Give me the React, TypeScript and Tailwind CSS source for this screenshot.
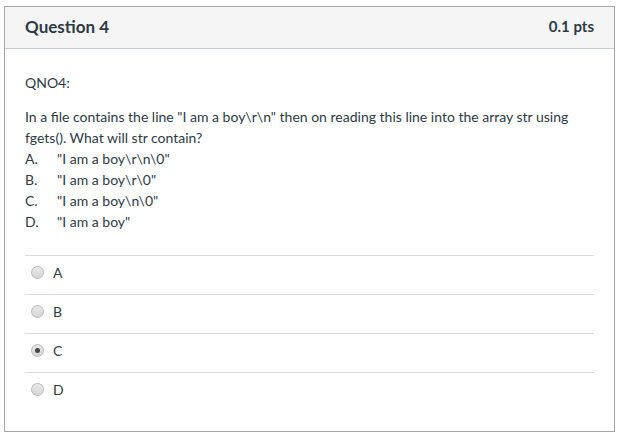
import React from "react";

const options = ["A", "B", "C", "D"];

function Radio({ checked }: { checked?: boolean }) {
  return (
    <span className="flex h-[13px] w-[13px] items-center justify-center rounded-full border border-[#b9b9b9] bg-gradient-to-b from-[#e8e8e8] to-[#d6d6d6]">
      {checked && <span className="h-[5px] w-[5px] rounded-full bg-[#444]" />}
    </span>
  );
}

export default function App() {
  return (
    <div className="min-h-[438px] w-[620px] bg-white pl-[4px] pt-[6px] text-[#2d3b45]" style={{ fontFamily: "Lato, 'Open Sans', sans-serif" }}>
      <div className="h-[426px] w-[611px] border border-[#a7a7a7]">
        <div className="flex h-[42px] items-center justify-between border-b border-[#c7cdd1] bg-[#f5f5f5] px-[20px] pb-[2px]">
          <span className="text-[17px] font-bold text-[#2d3b45]">Question 4</span>
          <span className="text-[15px] font-bold text-[#2d3b45]">0.1 pts</span>
        </div>
        <div className="px-[20px] pt-[23px] text-[14px] leading-[21px]">
          <div>QNO4:</div>
          <div className="mt-[13px]">
            <div>In a file contains the line "I am a boy\r\n" then on reading this line into the array str using</div>
            <div>fgets(). What will str contain?</div>
            <div className="flex"><span className="w-[32px]">A.</span><span>"I am a boy\r\n\0"</span></div>
            <div className="flex"><span className="w-[32px]">B.</span><span>"I am a boy\r\0"</span></div>
            <div className="flex"><span className="w-[32px]">C.</span><span>"I am a boy\n\0"</span></div>
            <div className="flex"><span className="w-[32px]">D.</span><span>"I am a boy"</span></div>
          </div>
          <div className="mt-[23px]">
            {options.map((o) => (
              <div key={o} className="flex h-[39px] items-center gap-[9px] border-t border-[#dcdcdc] pb-[5px] pl-[6px]">
                <Radio checked={o === "C"} />
                <span className="text-[14px]">{o}</span>
              </div>
            ))}
          </div>
        </div>
      </div>
    </div>
  );
}
